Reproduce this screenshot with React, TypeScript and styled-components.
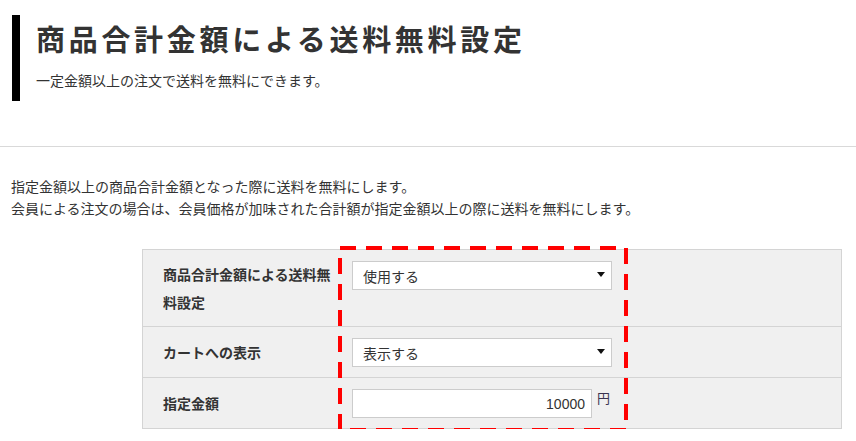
import React from "react";
import styled, { createGlobalStyle } from "styled-components";

const GlobalStyle = createGlobalStyle`
  body {
    margin: 0;
    background: #fff;
    color: #333;
    font-family: "Noto Sans CJK JP", "Noto Sans", sans-serif;
  }
`;

const Page = styled.div`
  width: 856px;
`;

const Header = styled.header`
  margin: 15px 0 0 12px;
  padding: 2px 0 11px 16px;
  border-left: 8px solid #000;
`;

const Title = styled.h1`
  margin: 0;
  font-size: 29px;
  line-height: 42px;
  font-weight: 700;
  letter-spacing: 3.7px;
  color: #333;
`;

const Lead = styled.p`
  margin: 11px 0 0;
  font-size: 14px;
  line-height: 20px;
`;

const Divider = styled.hr`
  margin: 45px 0 0;
  border: none;
  border-top: 1px solid #d9d9d9;
`;

const Description = styled.div`
  padding: 28px 0 0 11px;
  font-size: 14px;
  line-height: 22px;
`;

const TableWrap = styled.div`
  position: relative;
  width: 700px;
  margin: 30px 0 0 142px;
`;

const SettingsTable = styled.table`
  width: 100%;
  border-collapse: collapse;
  background: #f0f0f0;
  border: 1px solid #d4d4d4;
`;

const Row = styled.tr`
  border-bottom: 1px solid #d4d4d4;
`;

const Label = styled.th`
  width: 174px;
  padding: 10px 5px 10px 20px;
  text-align: left;
  vertical-align: middle;
  font-size: 14px;
  line-height: 28px;
  font-weight: 700;
`;

const Value = styled.td`
  padding: 11px 10px 10px;
  vertical-align: top;
`;

const Field = styled.div`
  display: flex;
  align-items: flex-start;
`;

const SelectBox = styled.div`
  position: relative;
  width: 260px;
  height: 29px;
`;

const Select = styled.select`
  appearance: none;
  width: 100%;
  height: 100%;
  box-sizing: border-box;
  margin: 0;
  padding: 0 20px 0 10px;
  border: 1px solid #ccc;
  border-radius: 0;
  background: #fff;
  color: #333;
  font-family: "Noto Sans CJK JP", sans-serif;
  font-size: 14px;
  outline: none;
`;

const Arrow = styled.span`
  position: absolute;
  top: 11px;
  right: 7px;
  width: 0;
  height: 0;
  border-left: 4px solid transparent;
  border-right: 4px solid transparent;
  border-top: 5px solid #111;
  pointer-events: none;
`;

const Amount = styled.input`
  width: 240px;
  height: 29px;
  box-sizing: border-box;
  margin: 0;
  padding: 0 6px;
  border: 1px solid #ccc;
  border-radius: 0;
  background: #fff;
  color: #333;
  text-align: right;
  font-family: "Liberation Sans", "Noto Sans CJK JP", sans-serif;
  font-size: 14px;
  outline: none;
`;

const Unit = styled.span`
  margin-left: 5px;
  font-size: 13px;
  line-height: 18px;
  color: #3a3450;
`;

const Highlight = styled.svg`
  position: absolute;
  left: 196px;
  top: -3px;
  pointer-events: none;
`;

function Dropdown({ value, options }: { value: string; options: string[] }) {
  return (
    <SelectBox>
      <Select defaultValue={value}>
        {options.map((o) => (
          <option key={o}>{o}</option>
        ))}
      </Select>
      <Arrow />
    </SelectBox>
  );
}

export default function App() {
  return (
    <Page>
      <GlobalStyle />
      <Header>
        <Title>商品合計金額による送料無料設定</Title>
        <Lead>一定金額以上の注文で送料を無料にできます。</Lead>
      </Header>
      <Divider />
      <Description>
        指定金額以上の商品合計金額となった際に送料を無料にします。
        <br />
        会員による注文の場合は、会員価格が加味された合計額が指定金額以上の際に送料を無料にします。
      </Description>
      <TableWrap>
        <SettingsTable>
          <tbody>
            <Row>
              <Label>商品合計金額による送料無料設定</Label>
              <Value>
                <Dropdown value="使用する" options={["使用する", "使用しない"]} />
              </Value>
            </Row>
            <Row>
              <Label>カートへの表示</Label>
              <Value>
                <Dropdown value="表示する" options={["表示する", "表示しない"]} />
              </Value>
            </Row>
            <Row>
              <Label>指定金額</Label>
              <Value>
                <Field>
                  <Amount defaultValue="10000" />
                  <Unit>円</Unit>
                </Field>
              </Value>
            </Row>
          </tbody>
        </SettingsTable>
        <Highlight width="290" height="186" viewBox="0 0 290 186">
          <rect
            x="2"
            y="2"
            width="286"
            height="182"
            fill="none"
            stroke="#ff0000"
            strokeWidth="4"
            strokeDasharray="16 10"
          />
        </Highlight>
      </TableWrap>
    </Page>
  );
}
